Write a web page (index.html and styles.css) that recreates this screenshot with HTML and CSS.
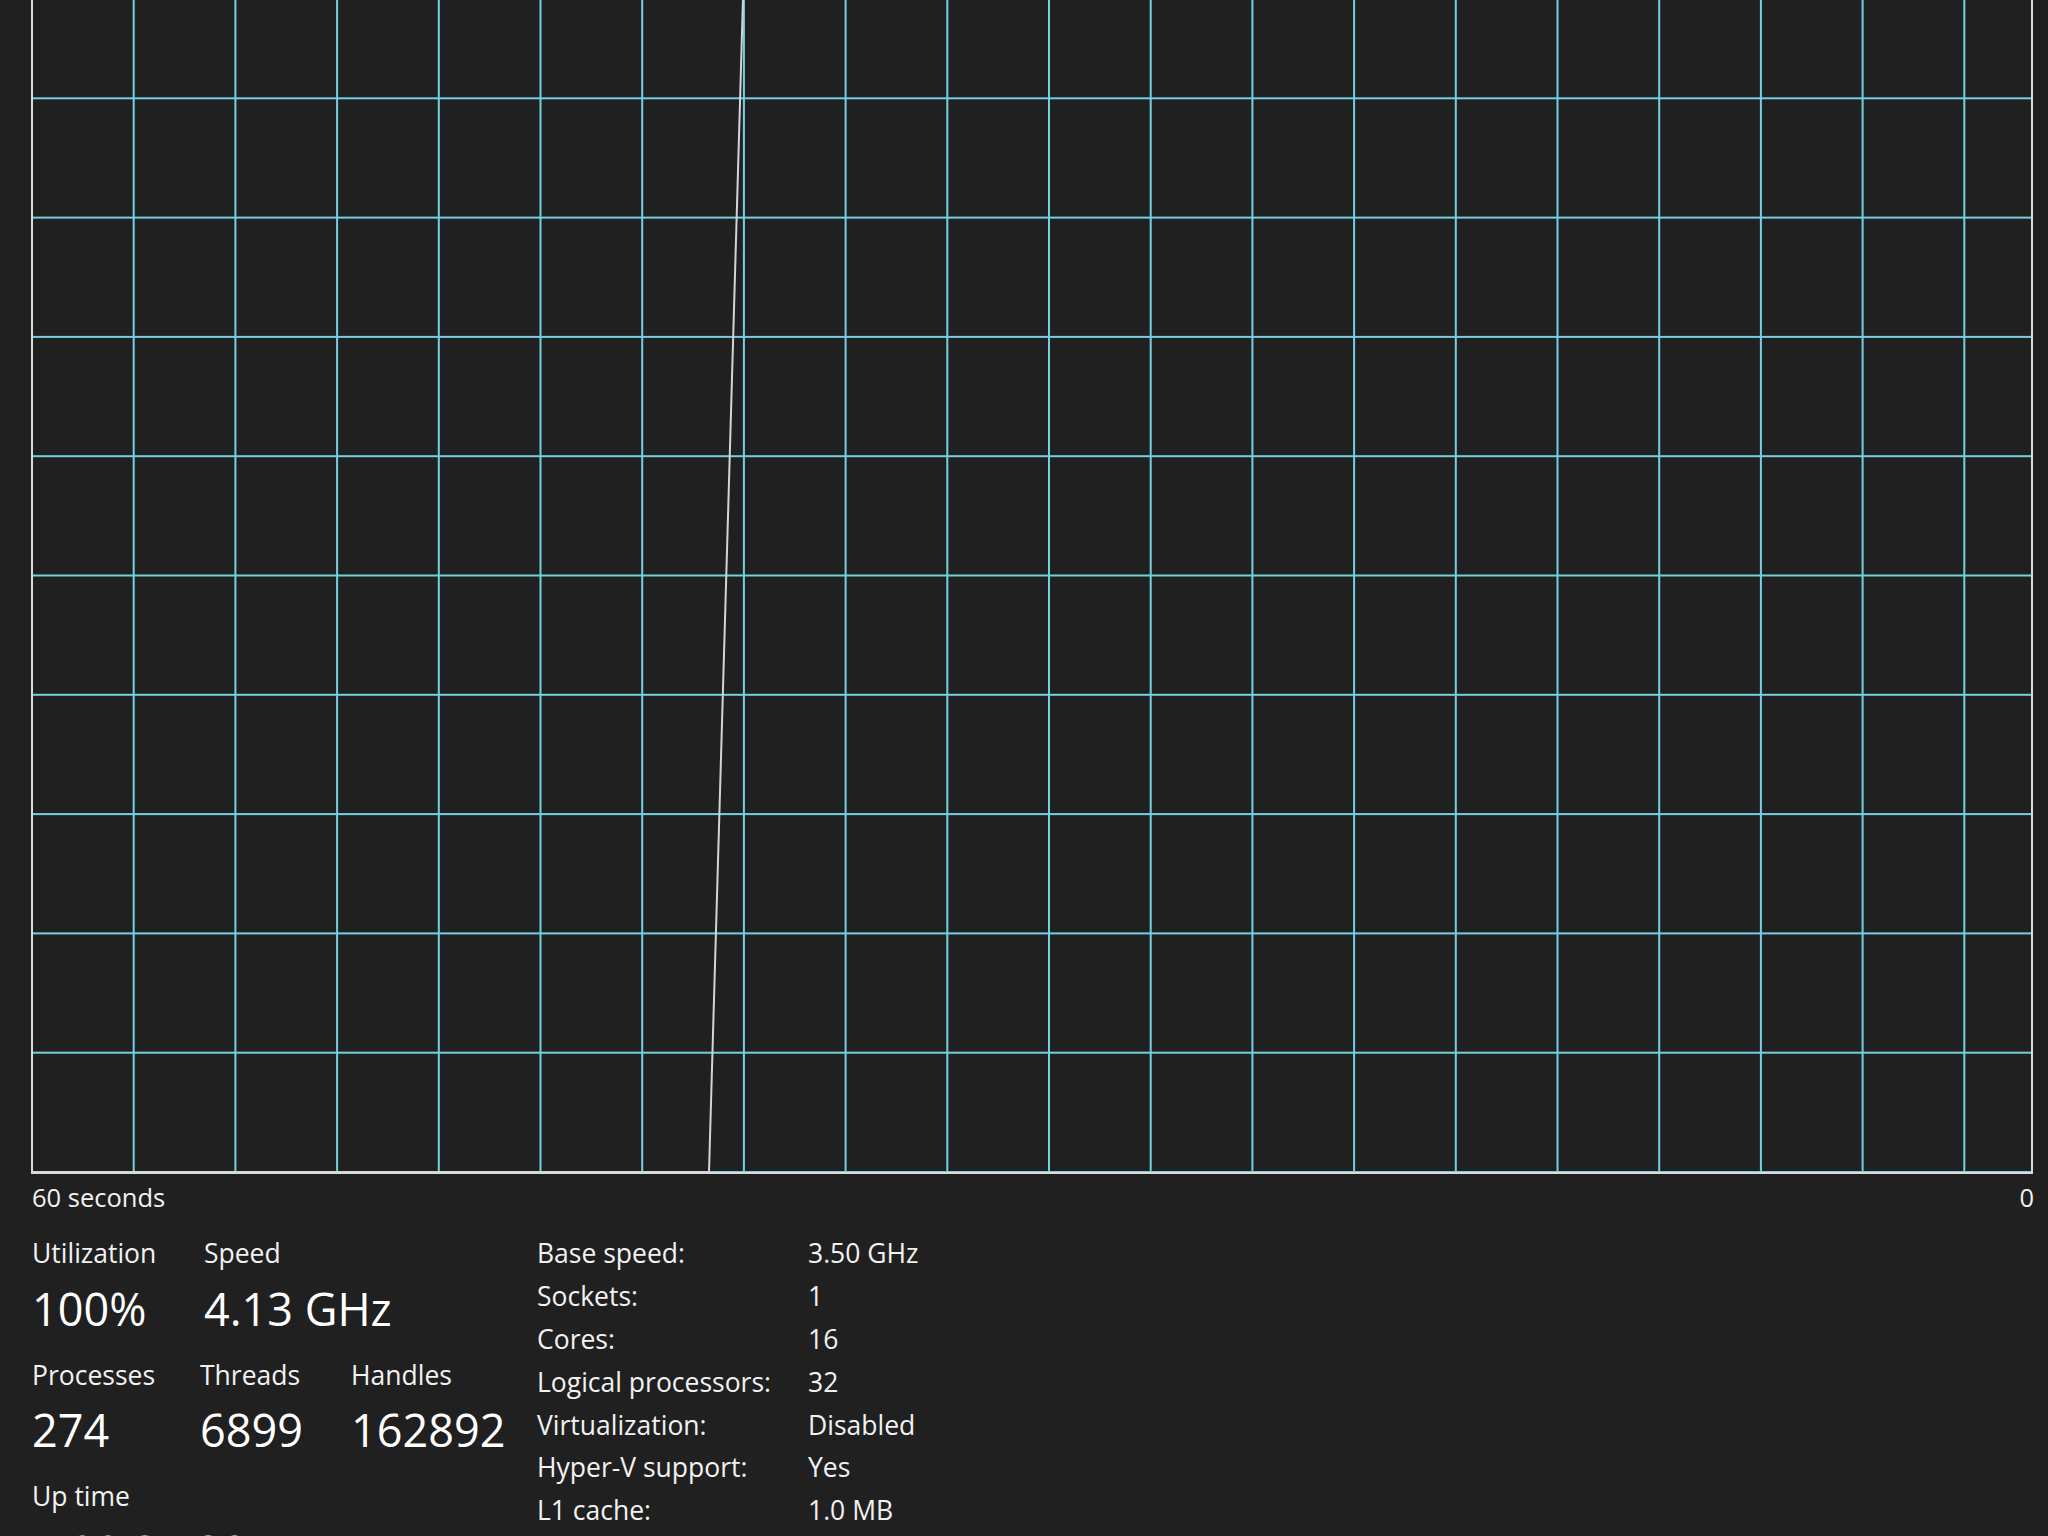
FILE: index.html
```html
<!DOCTYPE html>
<html lang="en">
<head>
    <meta charset="UTF-8">
    <meta name="viewport" content="width=device-width, initial-scale=1.0">
    <title>CPU - Performance</title>
    <link rel="stylesheet" href="styles.css">
</head>
<body>

<div class="graph">
    <svg class="graph-svg" width="1998" height="1191" viewBox="0 0 1998 1191">
        <defs>
            <pattern id="grid" patternUnits="userSpaceOnUse" x="-2" y="-3" width="101.7" height="119.3">
                <rect x="0" y="0" width="2" height="119.3" fill="#74d0e0"/>
                <rect x="0" y="0" width="101.7" height="2" fill="#74d0e0"/>
            </pattern>
        </defs>
        <rect width="1998" height="1191" fill="url(#grid)"/>
        <!-- usage line: 0% on the left, 100% from here on -->
        <polyline points="0,1191 676,1191 710.5,0 1998,0" fill="none" stroke="#d4d4d4" stroke-width="2"/>
    </svg>
</div>

<div class="axis">
    <span>60 seconds</span>
    <span>0</span>
</div>

<div class="details">
    <div class="stats">
        <div class="stat-row">
            <div class="stat stat-util">
                <div class="stat-label">Utilization</div>
                <div class="stat-value">100%</div>
            </div>
            <div class="stat">
                <div class="stat-label">Speed</div>
                <div class="stat-value">4.13 GHz</div>
            </div>
        </div>
        <div class="stat-row">
            <div class="stat stat-proc">
                <div class="stat-label">Processes</div>
                <div class="stat-value">274</div>
            </div>
            <div class="stat stat-threads">
                <div class="stat-label">Threads</div>
                <div class="stat-value">6899</div>
            </div>
            <div class="stat">
                <div class="stat-label">Handles</div>
                <div class="stat-value">162892</div>
            </div>
        </div>
        <div class="stat-row">
            <div class="stat">
                <div class="stat-label">Up time</div>
                <div class="stat-value">7:00:34:38</div>
            </div>
        </div>
    </div>

    <div class="specs">
        <div class="spec-row"><span class="spec-label">Base speed:</span><span>3.50 GHz</span></div>
        <div class="spec-row"><span class="spec-label">Sockets:</span><span>1</span></div>
        <div class="spec-row"><span class="spec-label">Cores:</span><span>16</span></div>
        <div class="spec-row"><span class="spec-label">Logical processors:</span><span>32</span></div>
        <div class="spec-row"><span class="spec-label">Virtualization:</span><span>Disabled</span></div>
        <div class="spec-row"><span class="spec-label">Hyper-V support:</span><span>Yes</span></div>
        <div class="spec-row"><span class="spec-label">L1 cache:</span><span>1.0 MB</span></div>
    </div>
</div>

</body>
</html>
```

FILE: styles.css
```css
html, body {
    height: 100%;
}
body {
    margin: 0;
    background-color: #202020;
    color: #f2f2f2;
    font-family: "Open Sans", "Noto Sans", Arial, sans-serif;
    overflow: hidden;
}
.graph {
    box-sizing: border-box;
    width: 2002px;
    height: 1195px;
    margin: -21px 0 0 31px;
    border: 2px solid #dadada;
}
.graph-svg {
    display: block;
}
.axis {
    display: flex;
    justify-content: space-between;
    width: 2002px;
    margin: 7px 0 0 32px;
    font-size: 25.5px;
    line-height: 32px;
}
.details {
    display: flex;
    margin: 19px 0 0 32px;
}
.stats {
    width: 505px;
}
.stat-row {
    display: flex;
    gap: 48px;
    margin-bottom: 21px;
}
.stat-util {
    width: 124px;
}
.stat-proc {
    width: 120px;
}
.stat-threads {
    width: 103px;
}
.stat-label {
    font-size: 26.5px;
    line-height: 42.67px;
    white-space: nowrap;
}
.stat-value {
    margin-top: 9px;
    font-size: 45px;
    line-height: 49px;
    color: #fff;
    white-space: nowrap;
}
.specs {
    font-size: 26.5px;
}
.spec-row {
    display: flex;
    height: 42.9px;
    line-height: 42.9px;
    white-space: nowrap;
}
.spec-label {
    width: 271px;
}
```
